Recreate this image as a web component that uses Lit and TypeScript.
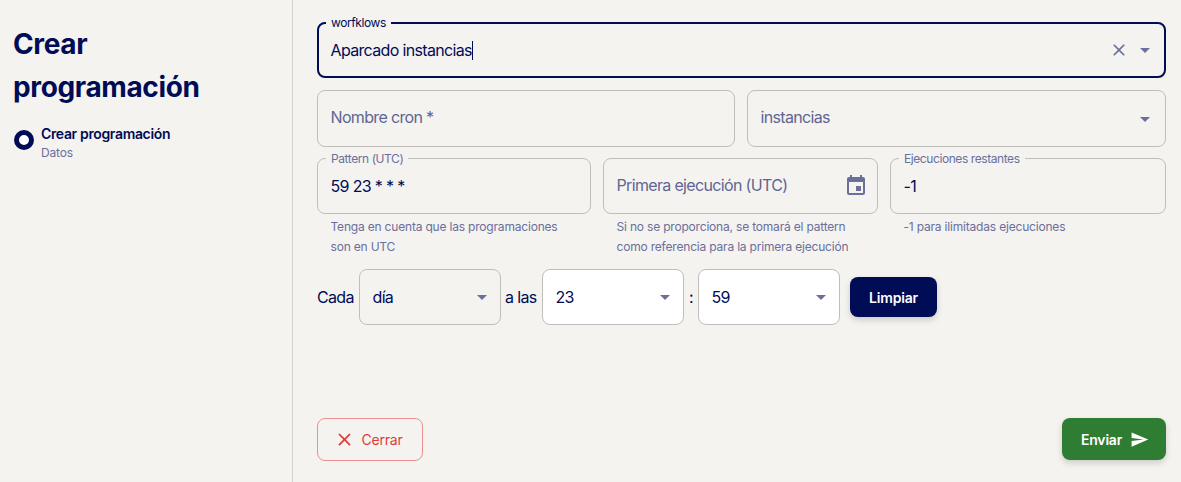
import { LitElement, html, css } from "lit";
import { customElement } from "lit/decorators.js";

const caret = html`<svg class="caret" viewBox="0 0 24 24"><path d="M7 10l5 5 5-5z"/></svg>`;

@customElement("app-root")
export class AppRoot extends LitElement {
  static styles = css`
    :host { display: block; width: 1181px; height: 482px; background: #f4f3f0; color: #000c56; font-family: Inter, "Liberation Sans", sans-serif; overflow: hidden; }
    * { box-sizing: border-box; }
    .page { display: flex; height: 482px; }
    .side { width: 293px; flex: none; border-right: 1px solid #d2d1d2; padding: 23px 14px 0 13px; }
    h1 { margin: 0; font-size: 28px; line-height: 43px; font-weight: 700; letter-spacing: -0.37px; color: #000c56; }
    .step { display: flex; gap: 7px; margin-top: 15px; padding-left: 1px; }
    .dot { width: 20px; height: 20px; margin-top: 6px; border-radius: 50%; border: 5px solid #000c56; background: #fff; flex: none; }
    .step-title { font-size: 14px; font-weight: 600; line-height: 20px; letter-spacing: -0.35px; }
    .step-sub { font-size: 12px; line-height: 18px; color: #6a6f9b; letter-spacing: -0.15px; }
    .main { flex: 1; display: flex; flex-direction: column; padding: 22px 15px 21px 24px; }
    .field { position: relative; height: 56px; border: 1px solid #bfbebb; border-radius: 8px; display: flex; align-items: center; padding: 0 13px 0 12.5px; font-size: 16px; color: #000c56; letter-spacing: -0.66px; }
    .field.focus { border: 2px solid #000c56; padding: 0 12px 0 11.5px; }
    .field.white { background: #fff; }
    .field.ph { color: #5f6593; }
    .grow { flex: 1; white-space: nowrap; }
    .field.ph .grow { padding-bottom: 2px; }
    .row2 .field.ph .grow { padding-bottom: 3px; }
    .label { position: absolute; left: 8px; top: -7px; padding: 0 5px; font-size: 12px; line-height: 14px; background: #f4f3f0; color: #6a6f9b; letter-spacing: -0.42px; }
    .focus .label { left: 7px; top: -8px; color: #000c56; }
    .cursor { display: inline-block; width: 1px; height: 19px; background: #000c56; vertical-align: -4px; }
    .caret { width: 24px; height: 24px; fill: #6a6f9b; margin-right: -5px; flex: none; }
    .clear { width: 20px; height: 20px; margin-right: 4px; fill: #6a6f9b; flex: none; }
    .cal { width: 24px; height: 24px; fill: #6a6f9b; margin-right: -4px; flex: none; }
    .row2 { display: grid; grid-template-columns: 418px 419px; gap: 12px; margin-top: 12px; }
    .row2 .field { height: 57px; }
    .row3 { display: grid; grid-template-columns: 274px 275px 276px; gap: 12px; margin-top: 11px; }
    .help { margin: 3px 0 0; padding: 0 14px 0 13.5px; font-size: 12px; line-height: 20px; color: #6a6f9b; letter-spacing: -0.19px; }
    .row4 { display: flex; align-items: center; margin-top: 12px; font-size: 16px; letter-spacing: -0.66px; }
    .row4 .field { width: 142px; flex: none; }
    .row4 .caret { margin-right: -7px; }
    .t1 { width: 42px; }
    .t2 { width: 41px; padding-left: 4px; }
    .t3 { width: 14px; padding-left: 5px; }
    .clean { margin-left: 10px; width: 87px; height: 40px; border: 0; border-radius: 8px; background: #000c56; color: #fff; font: 600 14px Inter, "Liberation Sans", sans-serif; letter-spacing: -0.2px; box-shadow: 0 3px 6px rgba(0, 0, 0, 0.16); }
    .actions { margin-top: auto; display: flex; justify-content: space-between; align-items: flex-start; }
    .close { width: 106px; height: 43px; border: 1px solid #ec8f8f; border-radius: 8px; background: transparent; color: #df3b3b; font: 400 14px Inter, "Liberation Sans", sans-serif; letter-spacing: -0.2px; display: flex; align-items: center; justify-content: center; gap: 6px; padding: 0 3px 0 0; }
    .close svg { width: 21px; height: 21px; fill: #df3b3b; }
    .send { width: 104px; height: 42px; border: 0; border-radius: 8px; background: #2e7d32; color: #fff; font: 600 14px Inter, "Liberation Sans", sans-serif; letter-spacing: -0.2px; display: flex; align-items: center; justify-content: center; gap: 8px; padding: 0 1px 0 3px; box-shadow: 0 3px 6px rgba(0, 0, 0, 0.16); }
    .send svg { width: 19px; height: 19px; fill: #fff; }
  `;

  render() {
    return html`
      <div class="page">
        <aside class="side">
          <h1>Crear programación</h1>
          <div class="step">
            <div class="dot"></div>
            <div>
              <div class="step-title">Crear programación</div>
              <div class="step-sub">Datos</div>
            </div>
          </div>
        </aside>
        <main class="main">
          <div class="field focus">
            <span class="label">worfklows</span>
            <span class="grow">Aparcado instancias<span class="cursor"></span></span>
            <svg class="clear" viewBox="0 0 24 24"><path d="M19 6.41 17.59 5 12 10.59 6.41 5 5 6.41 10.59 12 5 17.59 6.41 19 12 13.41 17.59 19 19 17.59 13.41 12z"/></svg>
            ${caret}
          </div>
          <div class="row2">
            <div class="field ph"><span class="grow">Nombre cron *</span></div>
            <div class="field ph"><span class="grow">instancias</span>${caret}</div>
          </div>
          <div class="row3">
            <div>
              <div class="field"><span class="label">Pattern (UTC)</span><span class="grow">59 23 * * *</span></div>
              <p class="help">Tenga en cuenta que las programaciones son en UTC</p>
            </div>
            <div>
              <div class="field ph"><span class="grow">Primera ejecución (UTC)</span>
                <svg class="cal" viewBox="0 0 24 24"><path d="M17 12h-5v5h5v-5zM16 1v2H8V1H6v2H5c-1.11 0-1.99.9-1.99 2L3 19c0 1.1.89 2 2 2h14c1.1 0 2-.9 2-2V5c0-1.1-.9-2-2-2h-1V1h-2zm3 18H5V8h14v11z"/></svg>
              </div>
              <p class="help">Si no se proporciona, se tomará el pattern como referencia para la primera ejecución</p>
            </div>
            <div>
              <div class="field"><span class="label">Ejecuciones restantes</span><span class="grow">-1</span></div>
              <p class="help">-1 para ilimitadas ejecuciones</p>
            </div>
          </div>
          <div class="row4">
            <span class="t1">Cada</span>
            <div class="field"><span class="grow">día</span>${caret}</div>
            <span class="t2">a las</span>
            <div class="field white"><span class="grow">23</span>${caret}</div>
            <span class="t3">:</span>
            <div class="field white"><span class="grow">59</span>${caret}</div>
            <button class="clean">Limpiar</button>
          </div>
          <div class="actions">
            <button class="close">
              <svg viewBox="0 0 24 24"><path d="M19 6.41 17.59 5 12 10.59 6.41 5 5 6.41 10.59 12 5 17.59 6.41 19 12 13.41 17.59 19 19 17.59 13.41 12z"/></svg>
              Cerrar
            </button>
            <button class="send">
              Enviar
              <svg viewBox="0 0 24 24"><path d="M2.01 21 23 12 2.01 3 2 10l15 2-15 2z"/></svg>
            </button>
          </div>
        </main>
      </div>
    `;
  }
}
